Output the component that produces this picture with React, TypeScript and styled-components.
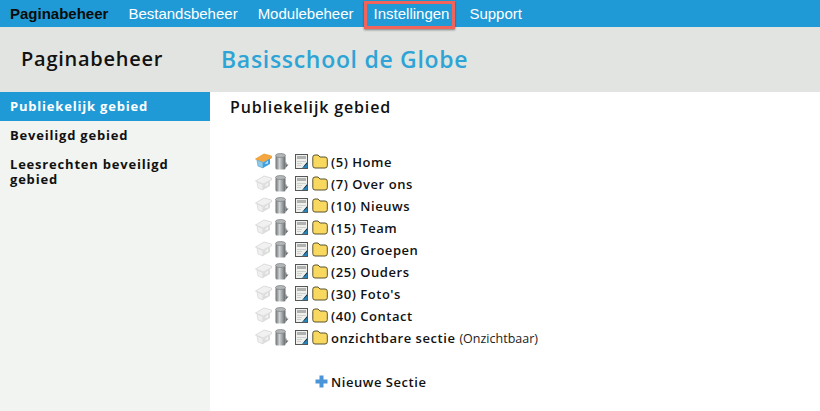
import * as React from 'react';
import styled, { createGlobalStyle } from 'styled-components';

const FONT_FAMILY = '"Open Sans", "Noto Sans", sans-serif';
const BLUE = '#1f9ad6';

const GlobalStyle = createGlobalStyle`
  html, body {
    margin: 0;
    padding: 0;
    background: #fff;
    overflow: hidden;
  }
`;

const Page = styled.div`
  width: 820px;
  height: 411px;
  display: flex;
  flex-direction: column;
  overflow: hidden;
  font-family: ${FONT_FAMILY};
`;

const TopNav = styled.nav`
  height: 27px;
  flex: none;
  display: flex;
  align-items: center;
  padding-left: 10px;
  gap: 20px;
  background: ${BLUE};
`;

const NavItem = styled.a<{ $active?: boolean; $marked?: boolean }>`
  position: relative;
  font-family: 'Liberation Sans', Arial, sans-serif;
  font-size: 15px;
  line-height: 27px;
  font-weight: ${({ $active }) => ($active ? 'bold' : 'normal')};
  color: ${({ $active }) => ($active ? '#0b0b0b' : '#fff')};

  ${({ $marked }) =>
    $marked &&
    `
    &:after {
      content: '';
      position: absolute;
      left: -10px;
      right: -6px;
      top: 1px;
      bottom: -2px;
      border: 3px solid #f0645c;
      box-shadow: 0 1px 2px rgba(0, 0, 0, 0.45);
    }
  `}
`;

const Banner = styled.header`
  height: 65px;
  flex: none;
  display: flex;
  align-items: center;
  padding-bottom: 2px;
  box-sizing: border-box;
  background: #e2e4e1;
`;

const BannerTitle = styled.div`
  width: 221px;
  padding-left: 21px;
  box-sizing: border-box;
  font-size: 20px;
  letter-spacing: 0.75px;
  font-weight: 600;
  color: #111;
`;

const SiteTitle = styled.div`
  font-size: 23px;
  letter-spacing: 0.7px;
  font-weight: 600;
  color: #2ea4d6;
`;

const Body = styled.div`
  flex: 1;
  display: flex;
  min-height: 0;
`;

const Sidebar = styled.aside`
  width: 210px;
  flex: none;
  background: #f2f4f1;
`;

const SideItem = styled.a<{ $active?: boolean }>`
  display: block;
  padding: 7px 10px;
  font-size: 13px;
  line-height: 15px;
  letter-spacing: 0.8px;
  font-weight: bold;
  color: ${({ $active }) => ($active ? '#fff' : '#111')};
  background: ${({ $active }) => ($active ? BLUE : 'transparent')};
`;

const Content = styled.main`
  flex: 1;
  padding: 3px 0 0 20px;
`;

const ContentTitle = styled.h2`
  margin: 0 0 32px;
  font-size: 16px;
  line-height: 24px;
  letter-spacing: 0.85px;
  font-weight: 600;
  color: #111;
`;

const Tree = styled.div`
  display: flex;
  flex-direction: column;
  padding-left: 25px;
`;

const TreeRow = styled.div`
  height: 22px;
  display: flex;
  align-items: center;
`;

const IconSlot = styled.span<{ $w: number }>`
  width: ${({ $w }) => $w}px;
  flex: none;
  display: flex;
  align-items: center;
  margin-top: -2px;
`;

const Label = styled.span`
  font-size: 13px;
  letter-spacing: 0.55px;
  font-weight: 600;
  color: #111;
`;

const Note = styled.span`
  margin-left: 4px;
  font-size: 12.5px;
  letter-spacing: 0;
  font-weight: normal;
  color: #222;
`;

const AddRow = styled(TreeRow)`
  margin-top: 22px;
  padding-left: 60px;
`;

function BoxIcon({ on }: { on?: boolean }) {
  return (
    <svg width="17" height="16" viewBox="0 0 17 16">
      <path d="M0.5 6 L9 1 L16.5 3 V5 L8 9 Z" fill={on ? '#f5a640' : '#f0f1f0'} stroke={on ? '#e89a30' : '#d4d6d4'} strokeWidth="0.8" />
      <path d="M2 7 L8 9.5 V15 L3 13 Z" fill={on ? '#8ccbec' : '#eeefee'} stroke={on ? '#5aa4d0' : '#d4d6d4'} strokeWidth="0.7" />
      <path d="M8 9.5 L15 5.5 V11 L8 15 Z" fill={on ? '#3f9fe0' : '#dcdedc'} />
      <path d="M9.5 11 L13 7.5 V10.5 Z" fill={on ? '#bfe4f7' : '#f4f5f4'} />
    </svg>
  );
}

function BinIcon() {
  return (
    <svg width="14" height="17" viewBox="0 0 14 17">
      <defs>
        <linearGradient id="bin" x1="0" x2="1" y1="0" y2="0">
          <stop offset="0" stopColor="#6a6e70" />
          <stop offset="0.4" stopColor="#cfd2d3" />
          <stop offset="1" stopColor="#63676a" />
        </linearGradient>
      </defs>
      <rect x="0.5" y="2.5" width="10" height="14" rx="1.5" fill="url(#bin)" />
      <ellipse cx="5.5" cy="2.5" rx="5" ry="2" fill="#b4b7b8" stroke="#787c7e" strokeWidth="0.7" />
      <path d="M10.5 9.5 h1 v2 h2 l-2.4 3 h-0.6 Z" fill="#6a6e70" />
    </svg>
  );
}

function PageIcon() {
  return (
    <svg width="13" height="15" viewBox="0 0 13 15">
      <rect x="0.5" y="0.5" width="12" height="14" fill="#efefeb" stroke="#54575a" />
      <rect x="2" y="2" width="9" height="3" fill="#b0b2b1" />
      <path d="M2 7.5 h9 M2 9.5 h5 M2 11.5 h4" stroke="#cdcfce" />
      <path d="M12 8 L7 14 H12 Z" fill="#2b86bb" />
      <path d="M12 9 L9 12.5" stroke="#222" strokeWidth="0.9" />
    </svg>
  );
}

function FolderIcon() {
  return (
    <svg width="16" height="15" viewBox="0 0 16 15">
      <path
        d="M0.8 3.2 Q0.8 1 3 1 H6 L8 3 H13 Q15.3 3 15.3 5.2 V11.8 Q15.3 14 13 14 H3 Q0.8 14 0.8 11.8 Z"
        fill="#f9d85f"
        stroke="#5a5432"
        strokeWidth="1"
      />
    </svg>
  );
}

function PlusIcon() {
  return (
    <svg width="13" height="13" viewBox="0 0 13 13">
      <path d="M4.5 0.5 H8.5 V4.5 H12.5 V8.5 H8.5 V12.5 H4.5 V8.5 H0.5 V4.5 H4.5 Z" fill="#4a94d8" />
    </svg>
  );
}

const sections = ['(5) Home', '(7) Over ons', '(10) Nieuws', '(15) Team', '(20) Groepen', '(25) Ouders', "(30) Foto's", '(40) Contact'];

function SectionRow({ label, on, note }: { label: string; on?: boolean; note?: string }) {
  return (
    <TreeRow>
      <IconSlot $w={20}><BoxIcon on={on} /></IconSlot>
      <IconSlot $w={20}><BinIcon /></IconSlot>
      <IconSlot $w={17}><PageIcon /></IconSlot>
      <IconSlot $w={19}><FolderIcon /></IconSlot>
      <Label>
        {label}
        {note && <Note>{note}</Note>}
      </Label>
    </TreeRow>
  );
}

export default function App() {
  return (
    <Page>
      <GlobalStyle />
      <TopNav>
        <NavItem $active>Paginabeheer</NavItem>
        <NavItem>Bestandsbeheer</NavItem>
        <NavItem>Modulebeheer</NavItem>
        <NavItem $marked>Instellingen</NavItem>
        <NavItem>Support</NavItem>
      </TopNav>
      <Banner>
        <BannerTitle>Paginabeheer</BannerTitle>
        <SiteTitle>Basisschool de Globe</SiteTitle>
      </Banner>
      <Body>
        <Sidebar>
          <SideItem $active>Publiekelijk gebied</SideItem>
          <SideItem>Beveiligd gebied</SideItem>
          <SideItem>Leesrechten beveiligd gebied</SideItem>
        </Sidebar>
        <Content>
          <ContentTitle>Publiekelijk gebied</ContentTitle>
          <Tree>
            {sections.map((s, i) => (
              <SectionRow key={s} label={s} on={i === 0} />
            ))}
            <SectionRow label="onzichtbare sectie" note="(Onzichtbaar)" />
            <AddRow>
              <IconSlot $w={16}><PlusIcon /></IconSlot>
              <Label>Nieuwe Sectie</Label>
            </AddRow>
          </Tree>
        </Content>
      </Body>
    </Page>
  );
}
